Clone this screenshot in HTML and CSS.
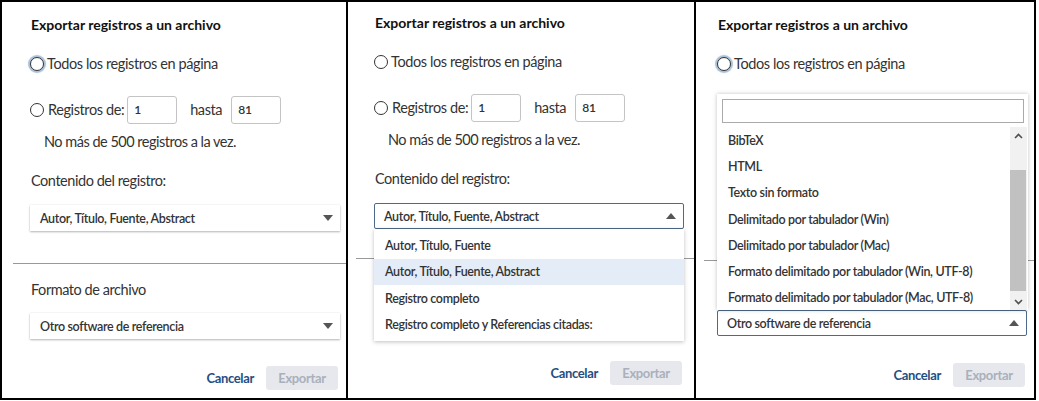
FILE: index.html
```html
<!DOCTYPE html>
<html lang="es">
<head>
<meta charset="utf-8">
<title>Exportar registros a un archivo</title>
<link rel="stylesheet" href="styles.css">
</head>
<body>
<div class="frame">
  <section class="panel panel--one">
    <div class="dialog">
      <h2 class="title">Exportar registros a un archivo</h2>
      <div class="radio-row radio-row--all"><span class="radio radio--focus"></span><span>Todos los registros en página</span></div>
      <div class="radio-row radio-row--range"><span class="radio"></span><span class="range-label">Registros de:</span><span class="num-input"><span>1</span></span><span class="hasta">hasta</span><span class="num-input"><span>81</span></span></div>
      <p class="hint">No más de 500 registros a la vez.</p>
      <p class="label label--content">Contenido del registro:</p>
      <div class="select-wrap"><div class="select"><span>Autor, Título, Fuente, Abstract</span><span class="caret"></span></div></div>
      <div class="divider"></div>
      <p class="label label--format">Formato de archivo</p>
      <div class="select-wrap select-wrap--format"><div class="select"><span>Otro software de referencia</span><span class="caret"></span></div></div>
      <div class="actions"><span class="cancel">Cancelar</span><span class="export">Exportar</span></div>
    </div>
  </section>

  <section class="panel panel--two">
    <div class="dialog">
      <h2 class="title">Exportar registros a un archivo</h2>
      <div class="radio-row radio-row--all"><span class="radio"></span><span>Todos los registros en página</span></div>
      <div class="radio-row radio-row--range"><span class="radio"></span><span class="range-label">Registros de:</span><span class="num-input"><span>1</span></span><span class="hasta">hasta</span><span class="num-input"><span>81</span></span></div>
      <p class="hint">No más de 500 registros a la vez.</p>
      <p class="label label--content">Contenido del registro:</p>
      <div class="select-wrap">
        <div class="select select--open"><span>Autor, Título, Fuente, Abstract</span><span class="caret caret--up"></span></div>
        <ul class="menu menu--below">
          <li class="menu-item">Autor, Título, Fuente</li>
          <li class="menu-item menu-item--active">Autor, Título, Fuente, Abstract</li>
          <li class="menu-item">Registro completo</li>
          <li class="menu-item">Registro completo y Referencias citadas:</li>
        </ul>
      </div>
      <div class="divider"></div>
      <p class="label label--format is-covered">Formato de archivo</p>
      <div class="select-wrap select-wrap--format is-covered"><div class="select"><span>Otro software de referencia</span><span class="caret"></span></div></div>
      <div class="actions"><span class="cancel">Cancelar</span><span class="export">Exportar</span></div>
    </div>
  </section>

  <section class="panel panel--three">
    <div class="dialog">
      <h2 class="title">Exportar registros a un archivo</h2>
      <div class="radio-row radio-row--all"><span class="radio radio--focus"></span><span>Todos los registros en página</span></div>
      <div class="radio-row radio-row--range is-covered"><span class="radio"></span><span class="range-label">Registros de:</span><span class="num-input"><span>1</span></span><span class="hasta">hasta</span><span class="num-input"><span>81</span></span></div>
      <p class="hint is-covered">No más de 500 registros a la vez.</p>
      <p class="label label--content is-covered">Contenido del registro:</p>
      <div class="select-wrap is-covered"><div class="select"><span>Autor, Título, Fuente, Abstract</span><span class="caret"></span></div></div>
      <div class="divider"></div>
      <p class="label label--format is-covered">Formato de archivo</p>
      <div class="select-wrap select-wrap--format">
        <div class="popup">
          <div class="popup-search"><span class="search-box"></span></div>
          <div class="popup-body">
            <ul class="menu-list">
              <li class="menu-item">BibTeX</li>
              <li class="menu-item">HTML</li>
              <li class="menu-item">Texto sin formato</li>
              <li class="menu-item">Delimitado por tabulador (Win)</li>
              <li class="menu-item">Delimitado por tabulador (Mac)</li>
              <li class="menu-item">Formato delimitado por tabulador (Win, UTF-8)</li>
              <li class="menu-item">Formato delimitado por tabulador (Mac, UTF-8)</li>
            </ul>
            <div class="scrollbar">
              <span class="scroll-btn"><svg width="9" height="6" viewBox="0 0 9 6"><path d="M1 5 L4.5 1.5 L8 5" fill="none" stroke="#505050" stroke-width="1.6"/></svg></span>
              <span class="scroll-track"><span class="scroll-thumb"></span></span>
              <span class="scroll-btn"><svg width="9" height="6" viewBox="0 0 9 6"><path d="M1 1 L4.5 4.5 L8 1" fill="none" stroke="#505050" stroke-width="1.6"/></svg></span>
            </div>
          </div>
        </div>
        <div class="select select--open"><span>Otro software de referencia</span><span class="caret caret--up"></span></div>
      </div>
      <div class="actions"><span class="cancel">Cancelar</span><span class="export">Exportar</span></div>
    </div>
  </section>
</div>
</body>
</html>
```

FILE: styles.css
```css
* { box-sizing: border-box; }
html, body { margin: 0; padding: 0; background: #fff; }
body {
  font-family: "Lato", "Liberation Sans", sans-serif;
  color: #333;
}
.frame {
  width: 1036px;
  height: 400px;
  border: 2px solid #000;
  display: flex;
  background: #fff;
}
.panel {
  position: relative;
  height: 100%;
  overflow: hidden;
}
.panel--one { width: 344px; padding: 13px 0 0 28px; }
.panel--two { width: 348px; border-left: 2px solid #000; padding: 11px 0 0 26px; }
.panel--three { flex: 1; border-left: 2px solid #000; padding: 13px 0 0 21px; }

.dialog { width: 310px; display: flex; flex-direction: column; }

/* content that lies under an open dropdown */
.is-covered { visibility: hidden; }
.is-covered .num-input { visibility: visible; }
.is-covered .num-input span { visibility: hidden; }

.title {
  margin: 0 0 0 1px;
  font-size: 14px;
  line-height: 20px;
  font-weight: 700;
  color: #111;
}
.radio-row {
  display: flex;
  align-items: center;
  font-size: 14.5px;
  letter-spacing: -0.4px;
  line-height: 20px;
}
.radio-row--all { margin-top: 19px; height: 20px; }
.radio-row--range { margin-top: 22px; height: 28px; }
.radio {
  width: 14px;
  height: 14px;
  border: 1.5px solid #333;
  border-radius: 50%;
  background: #fff;
  margin-right: 3px;
  flex: none;
}
.radio--focus { box-shadow: 0 0 1px 2px rgba(60, 110, 160, 0.45); }
.range-label { margin-left: 1px; }
.num-input {
  width: 50px;
  height: 28px;
  border: 1px solid #c4c4c4;
  border-radius: 3px;
  margin-left: 3px;
  padding-left: 6px;
  font-size: 12px;
  letter-spacing: 0;
  font-weight: 600;
  line-height: 26px;
  color: #333;
}
.hasta { margin: 0 9px 0 13px; }
.hasta + .num-input { margin-left: 0; }
.hint {
  margin: 8px 0 0 14px;
  font-size: 14.5px;
  letter-spacing: -0.5px;
  line-height: 20px;
}
.label {
  margin: 0 0 0 1px;
  font-size: 14.5px;
  letter-spacing: -0.45px;
  line-height: 20px;
}
.label--content { margin-top: 19px; }
.label--format { margin-top: 16px; }

.select-wrap { position: relative; margin-top: 14px; }
.select-wrap--format { margin-top: 13px; }
.select {
  height: 26px;
  display: flex;
  align-items: center;
  justify-content: space-between;
  padding: 0 7px 0 10px;
  font-size: 12.5px;
  letter-spacing: -0.35px;
  font-weight: 600;
  background: #fff;
  box-shadow: 0 0 1px rgba(0, 0, 0, 0.12), 0 1px 2px rgba(0, 0, 0, 0.28);
}
.select--open {
  box-shadow: none;
  border: 1px solid #4d6a8a;
  border-radius: 2px;
  padding-left: 9px;
}
.caret {
  width: 0;
  height: 0;
  border-left: 5.5px solid transparent;
  border-right: 5.5px solid transparent;
  border-top: 6px solid #555;
}
.caret--up { border-top: 0; border-bottom: 6px solid #555; }

.divider {
  height: 1px;
  background: #999;
  margin-top: 32px;
}
.panel--one .divider { margin-left: -17px; width: 340px; }
.panel--two .divider { margin-left: -18px; width: 340px; margin-top: 29px; }
.panel--three .divider { margin-left: -13px; width: 340px; margin-top: 29px; }

.actions {
  margin-top: 27px;
  display: flex;
  justify-content: flex-end;
  align-items: center;
  padding-right: 2px;
  font-size: 13px;
  letter-spacing: -0.35px;
  font-weight: 700;
}
.cancel { color: #1f4e82; margin-right: 12px; }
.export {
  width: 72px;
  height: 24px;
  border-radius: 3px;
  background: #e6e8ed;
  color: #aab0bb;
  display: flex;
  align-items: center;
  justify-content: center;
}

.menu {
  list-style: none;
  margin: 0;
  padding: 3px 0;
  position: absolute;
  left: 0;
  right: 0;
  top: 100%;
  background: #fff;
  box-shadow: 0 1px 4px rgba(0, 0, 0, 0.25);
  z-index: 2;
}
.menu-item {
  height: 26.5px;
  display: flex;
  align-items: center;
  padding-left: 11px;
  font-size: 12.5px;
  letter-spacing: -0.35px;
  font-weight: 600;
  white-space: nowrap;
}
.menu-item--active { background: #e4edf7; }

.popup {
  position: absolute;
  left: 0;
  width: 311px;
  bottom: 100%;
  height: 216px;
  background: #fff;
  box-shadow: 0 0 4px rgba(0, 0, 0, 0.25);
  z-index: 2;
  display: flex;
  flex-direction: column;
}
.popup-search { padding: 5px 4px 4px 5px; }
.search-box {
  display: block;
  height: 24px;
  border: 1px solid #aaa;
  background: #fff;
}
.popup-body { flex: 1; display: flex; overflow: hidden; }
.menu-list { list-style: none; margin: 0; padding: 0; flex: 1; }
.popup .menu-item { height: 26.3px; }
.scrollbar {
  width: 17px;
  margin-right: 1px;
  display: flex;
  flex-direction: column;
  background: #f1f1f1;
}
.scroll-btn { height: 17px; display: flex; align-items: center; justify-content: center; }
.scroll-track { flex: 1; position: relative; }
.scroll-thumb {
  position: absolute;
  left: 0;
  right: 1px;
  top: 26px;
  bottom: 2px;
  background: #c1c1c1;
}
```
